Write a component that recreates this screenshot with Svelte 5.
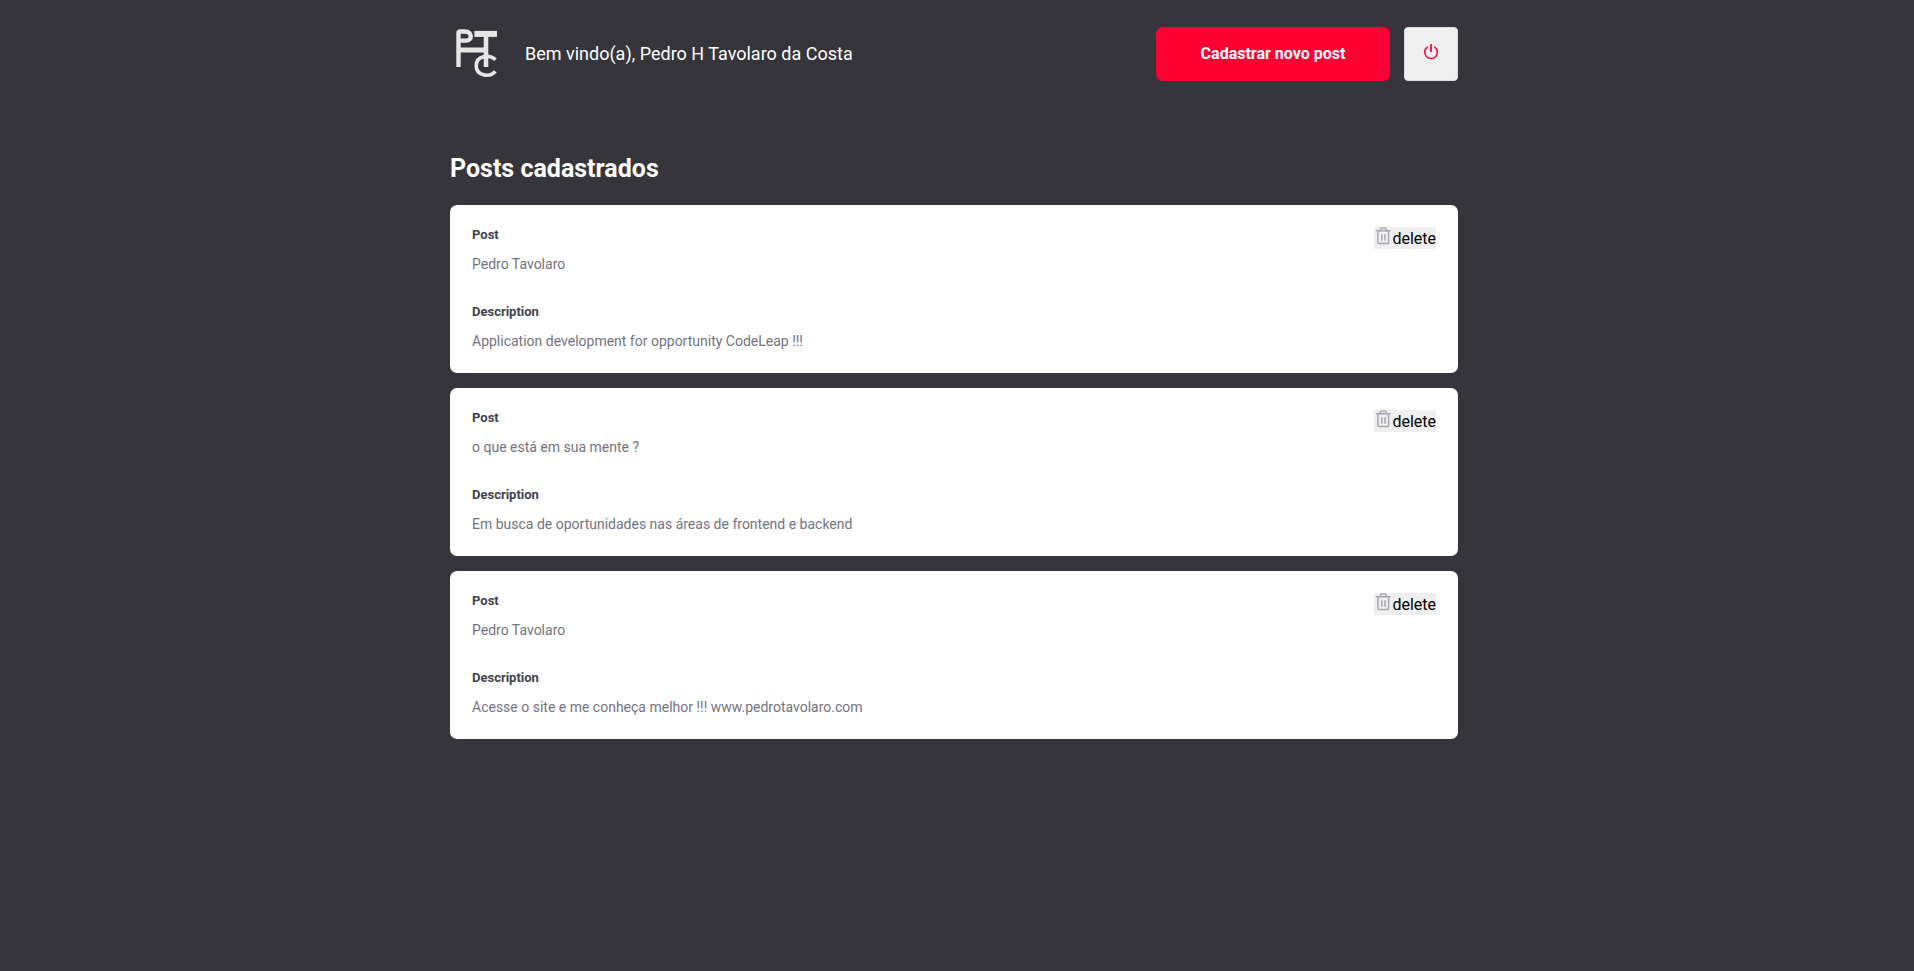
<script lang="ts">
  type Post = { id: number; title: string; description: string };

  let posts = $state<Post[]>([
    { id: 1, title: 'Pedro Tavolaro', description: 'Application development for opportunity CodeLeap !!!' },
    { id: 2, title: 'o que está em sua mente ?', description: 'Em busca de oportunidades nas áreas de frontend e backend' },
    { id: 3, title: 'Pedro Tavolaro', description: 'Acesse o site e me conheça melhor !!! www.pedrotavolaro.com' },
  ]);

  function remove(id: number) {
    posts = posts.filter((post) => post.id !== id);
  }
</script>

<div class="shell">
  <div class="page">
    <header>
      <svg class="logo" viewBox="-2 3 54 54" role="img" aria-label="PTC">
        <g fill="none" stroke="#e6e6e6">
          <path stroke-width="4.400" stroke-linejoin="round" d="M6.500 43V9Q6.500 7.500 8.500 7.500H13C20.500 7.500 20.500 16.600 14 16.600H8.500" />
          <path stroke-width="5" d="M7 26H34" />
          <path stroke-width="6" d="M22.400 9.900H45" />
          <path stroke-width="4.600" d="M34 10V43" />
          <path stroke-width="3.600" d="M43.500 35.800C37 29.500 24.200 32 24.200 41.700C24.200 51.500 37 54 43.500 47.500" />
        </g>
      </svg>
      <span class="welcome">Bem vindo(a), Pedro H Tavolaro da Costa</span>
      <a class="create" href="#novo">Cadastrar novo post</a>
      <button class="logout" type="button" aria-label="Sair">
        <svg viewBox="0 0 18 18" width="18" height="18" fill="none" stroke="#ff0033">
          <path stroke-width="1.800" d="M9 1V9" />
          <path stroke-width="1.500" stroke-linecap="round" d="M12.700 4.100A6.300 6.300 0 1 1 5.300 4.100" />
        </svg>
      </button>
    </header>

    <main>
      <h1>Posts cadastrados</h1>
      <ul>
        {#each posts as post (post.id)}
          <li>
            <dl>
              <dt>Post</dt>
              <dd>{post.title}</dd>
              <dt>Description</dt>
              <dd>{post.description}</dd>
            </dl>
            <button class="delete" type="button" onclick={() => remove(post.id)}>
              <svg viewBox="0 0 18 18" width="18" height="18" fill="none" stroke="#a8a8b3" stroke-width="1.500" stroke-linecap="round" stroke-linejoin="round">
                <path d="M2.500 3.700H16" />
                <path d="M7.800 7.800V13.200M10.900 7.800V13.200" />
                <path d="M14.600 3.700V15.500Q14.600 16.600 13.500 16.600H5Q3.900 16.600 3.900 15.500V3.700" />
                <path d="M12.200 3.700V2.200Q12.200 1 11 1H7.500Q6.300 1 6.300 2.200V3.700" />
              </svg>
              <span>delete</span>
            </button>
          </li>
        {/each}
      </ul>
    </main>
  </div>
</div>

<style>
  :global(body) {
    background: #36353b;
  }

  .shell {
    padding-right: 6px;
    font-family: Roboto, sans-serif;
  }

  .page {
    max-width: 1008px;
    margin: 0 auto;
    padding: 27px 0;
  }

  header {
    display: flex;
    align-items: center;
  }

  .logo {
    width: 54px;
    height: 54px;
    flex: none;
  }

  .welcome {
    margin-left: 21px;
    color: #fff;
    font-size: 18px;
    line-height: 22px;
  }

  .create {
    width: 234px;
    margin-left: auto;
    border-radius: 7px;
    background: #ff0033;
    color: #fff;
    font-size: 16px;
    font-weight: 700;
    line-height: 54px;
    text-align: center;
    text-decoration: none;
  }

  .logout {
    display: flex;
    align-items: center;
    justify-content: center;
    box-sizing: border-box;
    width: 54px;
    height: 54px;
    margin-left: 14px;
    padding: 0 0 4px;
    border: 1px solid #dcdce6;
    border-radius: 4px;
    background: #efefef;
    cursor: pointer;
  }

  h1 {
    margin: 73px 0 21px;
    color: #fff;
    font-size: 25px;
    line-height: 30px;
  }

  ul {
    display: grid;
    gap: 15px;
    margin: 0;
    padding: 0;
    list-style: none;
  }

  li {
    display: flex;
    align-items: flex-start;
    justify-content: space-between;
    padding: 22px;
    border-radius: 7px;
    background: #fff;
  }

  dl {
    margin: 0;
  }

  dt {
    margin-bottom: 13px;
    color: #41414d;
    font-size: 13px;
    font-weight: 700;
    line-height: 15px;
  }

  dd {
    margin: 0;
    color: #737380;
    font-size: 14px;
    line-height: 19px;
  }

  dd + dt {
    margin-top: 30px;
  }

  .delete {
    display: flex;
    height: 22px;
    padding: 0;
    border: 0;
    background: #efefef;
    color: #000;
    font: 16px/24px Roboto, sans-serif;
    cursor: pointer;
  }
</style>
